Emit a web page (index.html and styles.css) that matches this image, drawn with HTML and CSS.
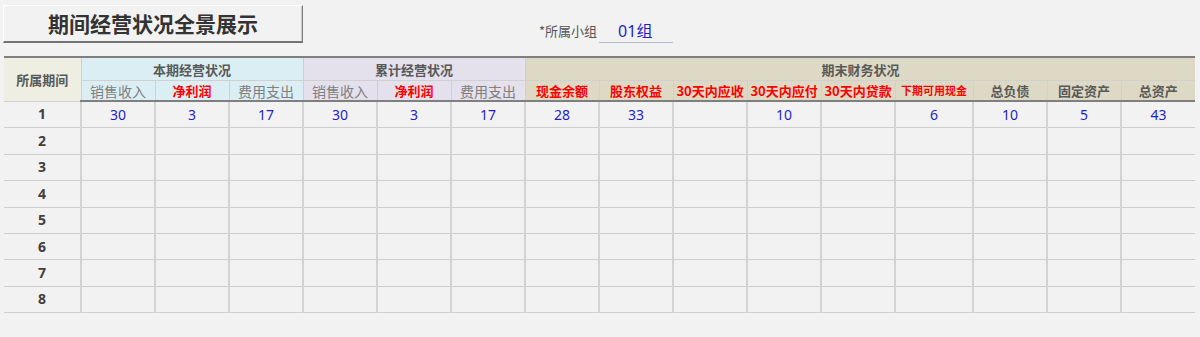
FILE: index.html
```html
<!DOCTYPE html>
<html lang="zh">
<head>
<meta charset="utf-8">
<link rel="stylesheet" href="styles.css">
</head>
<body>
<div class="top">
  <div class="title">期间经营状况全景展示</div>
  <div class="group">
    <span class="group-label">*所属小组</span>
    <span class="group-value">01组</span>
  </div>
</div>
<table class="grid">
  <colgroup>
    <col class="c-first">
    <col class="c"><col class="c"><col class="c">
    <col class="c"><col class="c"><col class="c">
    <col class="c"><col class="c"><col class="c"><col class="c"><col class="c">
    <col class="c-wide">
    <col class="c"><col class="c"><col class="c">
  </colgroup>
  <thead>
    <tr class="h1">
      <th rowspan="2" class="period">所属期间</th>
      <th colspan="3" class="cur">本期经营状况</th>
      <th colspan="3" class="cum">累计经营状况</th>
      <th colspan="9" class="fin">期末财务状况</th>
    </tr>
    <tr class="h2">
      <th class="cur light">销售收入</th>
      <th class="cur red">净利润</th>
      <th class="cur light">费用支出</th>
      <th class="cum light">销售收入</th>
      <th class="cum red">净利润</th>
      <th class="cum light">费用支出</th>
      <th class="fin red">现金余额</th>
      <th class="fin red">股东权益</th>
      <th class="fin red">30天内应收</th>
      <th class="fin red">30天内应付</th>
      <th class="fin red">30天内贷款</th>
      <th class="fin red small">下期可用现金</th>
      <th class="fin">总负债</th>
      <th class="fin">固定资产</th>
      <th class="fin">总资产</th>
    </tr>
  </thead>
  <tbody>
    <tr><td class="lbl">1</td><td>30</td><td>3</td><td>17</td><td>30</td><td>3</td><td>17</td><td>28</td><td>33</td><td></td><td>10</td><td></td><td>6</td><td>10</td><td>5</td><td>43</td></tr>
    <tr><td class="lbl">2</td><td></td><td></td><td></td><td></td><td></td><td></td><td></td><td></td><td></td><td></td><td></td><td></td><td></td><td></td><td></td></tr>
    <tr><td class="lbl">3</td><td></td><td></td><td></td><td></td><td></td><td></td><td></td><td></td><td></td><td></td><td></td><td></td><td></td><td></td><td></td></tr>
    <tr><td class="lbl">4</td><td></td><td></td><td></td><td></td><td></td><td></td><td></td><td></td><td></td><td></td><td></td><td></td><td></td><td></td><td></td></tr>
    <tr><td class="lbl">5</td><td></td><td></td><td></td><td></td><td></td><td></td><td></td><td></td><td></td><td></td><td></td><td></td><td></td><td></td><td></td></tr>
    <tr><td class="lbl">6</td><td></td><td></td><td></td><td></td><td></td><td></td><td></td><td></td><td></td><td></td><td></td><td></td><td></td><td></td><td></td></tr>
    <tr><td class="lbl">7</td><td></td><td></td><td></td><td></td><td></td><td></td><td></td><td></td><td></td><td></td><td></td><td></td><td></td><td></td><td></td></tr>
    <tr><td class="lbl">8</td><td></td><td></td><td></td><td></td><td></td><td></td><td></td><td></td><td></td><td></td><td></td><td></td><td></td><td></td><td></td></tr>
  </tbody>
</table>
</body>
</html>
```

FILE: styles.css
```css
html, body {
  margin: 0;
  padding: 0;
  background: #f2f2f2;
}
body {
  font-family: "Noto Sans CJK SC", "Noto Sans", sans-serif;
  color: #404040;
  height: 337px;
  overflow: hidden;
}
.top {
  display: flex;
  align-items: flex-start;
  height: 56px;
}
.title {
  margin: 5px 0 0 3px;
  width: 298px;
  height: 35px;
  border-top: 1px solid #ffffff;
  border-left: 1px solid #ffffff;
  border-right: 1px solid #808080;
  border-bottom: 2px solid #737373;
  box-shadow: inset -1px 0 0 #c8c8c8;
  display: flex;
  align-items: center;
  justify-content: center;
  font-size: 21px;
  font-weight: bold;
  color: #333333;
  line-height: 1;
}
.group {
  margin: 19px 0 0 236px;
  display: flex;
  align-items: center;
}
.group-label {
  font-size: 13px;
  color: #555555;
  line-height: 24px;
}
.group-value {
  margin-left: 2px;
  width: 74px;
  box-sizing: border-box;
  padding-left: 19px;
  font-family: "Noto Sans", "Noto Sans CJK SC", sans-serif;
  font-size: 16px;
  color: #1f1fc8;
  line-height: 22px;
  border-bottom: 1px solid #b4b9cc;
}
.grid {
  margin-left: 4px;
  border-collapse: collapse;
  table-layout: fixed;
  width: 1191px;
}
.c-first { width: 77px; }
.c { width: 74px; }
.c-wide { width: 78px; }
.grid th {
  padding: 0;
  font-weight: bold;
  font-size: 13px;
  color: #595959;
  border: 1px solid #d0d0d0;
  white-space: nowrap;
  line-height: 1;
}
.h1 th {
  height: 22px;
  border-top: 2px solid #7f7f7f;
}
.h2 th {
  height: 19px;
  border-bottom: 2px solid #7f7f7f;
}
.grid th.period {
  background: #eeefe2;
  border-left: none;
}
.grid th.cur { background: #dbeef4; }
.grid th.cum { background: #e4e0ec; }
.grid th.fin { background: #ddd9c4; }
.grid th.light {
  font-weight: normal;
  font-size: 14px;
  color: #7f7f7f;
}
.grid th.red { color: #ff0000; }
.grid th.small { font-size: 11px; }
.h1 th.fin { text-align: left; padding-left: 296px; }
.h1 th:last-child, .h2 th:last-child { border-right: none; }
.grid td {
  height: 25.4px;
  padding: 0;
  text-align: center;
  font-family: "Noto Sans", "Noto Sans CJK SC", sans-serif;
  font-size: 14px;
  color: #1f1fc8;
  border-left: 2px solid #d3d3d3;
  border-bottom: 1px solid #cfcfcf;
  line-height: 1;
}
.grid td.lbl {
  border-left: none;
  font-weight: bold;
  color: #404040;
}
```
